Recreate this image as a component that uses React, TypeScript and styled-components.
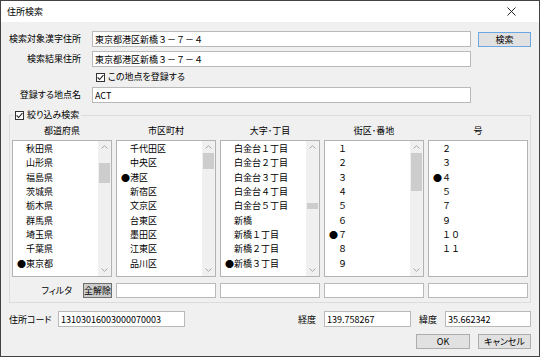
import React from "react";
import styled, { createGlobalStyle } from "styled-components";

const GlobalStyle = createGlobalStyle`
  html, body { margin: 0; padding: 0; background: #f0f0f0; }
  body {
    font-family: "Noto Sans CJK JP", "Noto Sans", sans-serif;
    font-size: 9px;
    color: #000;
  }
  * { box-sizing: border-box; }
`;

const Window = styled.div`
  width: 540px;
  height: 357px;
  border: 1px solid #434343;
  background: #f0f0f0;
  display: flex;
  flex-direction: column;
  overflow: hidden;
`;

const TitleBar = styled.div`
  flex: none;
  height: 21px;
  background: #fff;
  display: flex;
  align-items: center;
  justify-content: space-between;
  padding: 0 23px 0 6px;
  line-height: 21px;
`;

const Content = styled.div`
  flex: 1;
  display: flex;
  flex-direction: column;
  padding: 9px 8px 0 8px;
`;

const Form = styled.div`
  display: grid;
  grid-template-columns: 83px 379px 60px;
  grid-template-rows: 16px 16px 12px 16px;
  row-gap: 4px;
`;

const FieldLabel = styled.div`
  text-align: right;
  padding-right: 11px;
  line-height: 16px;
  white-space: nowrap;
  font-feature-settings: "palt";
`;

const TextBox = styled.input<{ $h?: number }>`
  display: block;
  width: 100%;
  height: ${(p) => p.$h ?? 16}px;
  margin: 0;
  border: 1px solid #b9b9b9;
  background: #fff;
  padding: 0 2px;
  font: inherit;
  color: #000;
  outline: none;
`;

const Button = styled.button<{ $w: number; $default?: boolean }>`
  width: ${(p) => p.$w}px;
  height: 15px;
  margin: 0;
  padding: 0;
  border: 1px solid ${(p) => (p.$default ? "#6aa7e3" : "#adadad")};
  background: #e1e1e1;
  font: inherit;
  color: #000;
  line-height: 13px;
  font-feature-settings: "palt";
`;

const SearchButton = styled(Button)`
  justify-self: end;
  align-self: end;
`;

const CheckRow = styled.label<{ $indent?: number }>`
  display: flex;
  align-items: center;
  gap: 3px;
  padding-left: ${(p) => p.$indent ?? 0}px;
  white-space: nowrap;
  font-feature-settings: "palt";
  line-height: 12px;
`;

const CheckBox = styled.span`
  flex: none;
  width: 9px;
  height: 9px;
  border: 1px solid #333;
  background: #fff;
  display: flex;
  align-items: center;
  justify-content: center;
`;

const Group = styled.fieldset`
  margin: 6px 0 0 0;
  padding: 0 2px 4px 2px;
  border: 1px solid #dcdcdc;
  min-width: 0;
`;

const Legend = styled.legend`
  padding: 0 2px;
  margin-left: 1px;
  height: 12px;
`;

const Columns = styled.div<{ $top: number; $h?: number }>`
  display: grid;
  grid-template-columns: repeat(5, 100px);
  column-gap: 4px;
  margin-top: ${(p) => p.$top}px;
  ${(p) => (p.$h ? `height: ${p.$h}px;` : "")}
`;

const ColumnHeader = styled.div`
  text-align: center;
  line-height: 14px;
  height: 14px;
`;

const ListBox = styled.div`
  height: 137px;
  border: 1px solid #b3b3b3;
  background: #fff;
  display: flex;
  overflow: hidden;
`;

const Items = styled.div`
  flex: 1;
  min-width: 0;
  padding: 1px 0 0 4px;
  overflow: hidden;
`;

const Item = styled.div`
  height: 14.35px;
  line-height: 14.35px;
  white-space: nowrap;
  display: flex;
`;

const Marker = styled.span`
  flex: none;
  width: 9px;
  text-align: center;
`;

const ScrollBar = styled.div`
  flex: none;
  width: 13px;
  background: #f0f0f0;
  display: flex;
  flex-direction: column;
`;

const ArrowBox = styled.div`
  flex: none;
  height: 12px;
  display: flex;
  align-items: center;
  justify-content: center;
`;

const Track = styled.div`
  flex: 1;
  padding: 0 1px;
`;

const Thumb = styled.div`
  background: #cdcdcd;
  width: 100%;
`;

const FilterCell = styled.div`
  display: flex;
  align-items: center;
  justify-content: flex-end;
  gap: 11px;
`;

const FilterLabel = styled.span`
  font-feature-settings: "palt";
  white-space: nowrap;
`;

const ClearButton = styled.button`
  width: 29px;
  height: 15px;
  margin: 0;
  padding: 0;
  border: 1px solid #6f6f6f;
  background: #cccccc;
  font: inherit;
  color: #000;
  line-height: 13px;
  white-space: nowrap;
`;

const BottomRow = styled.div`
  margin-top: 8px;
  display: flex;
  align-items: center;
  justify-content: space-between;
  height: 16px;
`;

const Field = styled.div`
  display: flex;
  align-items: center;
  gap: 8px;
`;

const InlineLabel = styled.span<{ $w?: number }>`
  white-space: nowrap;
  font-feature-settings: "palt";
  ${(p) => (p.$w ? `width: ${p.$w}px;` : "")}
`;

const FieldBox = styled.div<{ $w: number }>`
  width: ${(p) => p.$w}px;
`;

const ButtonRow = styled.div`
  margin-top: 7px;
  display: flex;
  justify-content: flex-end;
  gap: 8px;
`;

const Check = () => (
  <CheckBox>
    <svg width="7" height="7" viewBox="0 0 7 7">
      <polyline points="0.6,3.4 2.6,5.5 6.4,1.2" fill="none" stroke="#222" strokeWidth="1.1" />
    </svg>
  </CheckBox>
);

const Chevron = ({ down }: { down?: boolean }) => (
  <svg width="7" height="4" viewBox="0 0 7 4">
    <polyline
      points={down ? "0.5,0.5 3.5,3.3 6.5,0.5" : "0.5,3.5 3.5,0.7 6.5,3.5"}
      fill="none"
      stroke="#a8a8a8"
      strokeWidth="1"
    />
  </svg>
);

type ListData = {
  header: string;
  items: string[];
  selected: number;
  thumb?: { top: number; height: number };
};

const lists: ListData[] = [
  {
    header: "都道府県",
    items: ["秋田県", "山形県", "福島県", "茨城県", "栃木県", "群馬県", "埼玉県", "千葉県", "東京都"],
    selected: 8,
    thumb: { top: 10, height: 20 },
  },
  {
    header: "市区町村",
    items: ["千代田区", "中央区", "港区", "新宿区", "文京区", "台東区", "墨田区", "江東区", "品川区"],
    selected: 2,
    thumb: { top: 0, height: 16 },
  },
  {
    header: "大字･丁目",
    items: ["白金台１丁目", "白金台２丁目", "白金台３丁目", "白金台４丁目", "白金台５丁目", "新橋", "新橋１丁目", "新橋２丁目", "新橋３丁目"],
    selected: 8,
    thumb: { top: 50, height: 6 },
  },
  {
    header: "街区･番地",
    items: ["１", "２", "３", "４", "５", "６", "７", "８", "９"],
    selected: 6,
    thumb: { top: 0, height: 38 },
  },
  {
    header: "号",
    items: ["２", "３", "４", "５", "７", "９", "１０", "１１"],
    selected: 2,
  },
];

const List = ({ data }: { data: ListData }) => (
  <ListBox>
    <Items>
      {data.items.map((it, i) => (
        <Item key={it}>
          <Marker>{i === data.selected ? "●" : ""}</Marker>
          <span>{it}</span>
        </Item>
      ))}
    </Items>
    {data.thumb && (
      <ScrollBar>
        <ArrowBox>
          <Chevron />
        </ArrowBox>
        <Track>
          <Thumb style={{ marginTop: data.thumb.top, height: data.thumb.height }} />
        </Track>
        <ArrowBox>
          <Chevron down />
        </ArrowBox>
      </ScrollBar>
    )}
  </ListBox>
);

export default function App() {
  return (
    <>
      <GlobalStyle />
      <Window>
        <TitleBar>
          <span>住所検索</span>
          <svg width="9" height="9" viewBox="0 0 9 9">
            <path d="M0.5 0.5 L8.5 8.5 M8.5 0.5 L0.5 8.5" stroke="#222" strokeWidth="1" />
          </svg>
        </TitleBar>
        <Content>
          <Form>
            <FieldLabel>検索対象漢字住所</FieldLabel>
            <TextBox readOnly defaultValue="東京都港区新橋３－７－４" />
            <SearchButton $w={53} $default>
              検索
            </SearchButton>

            <FieldLabel>検索結果住所</FieldLabel>
            <TextBox readOnly defaultValue="東京都港区新橋３－７－４" />
            <span />

            <span />
            <CheckRow $indent={4}>
              <Check />
              この地点を登録する
            </CheckRow>
            <span />

            <FieldLabel>登録する地点名</FieldLabel>
            <TextBox readOnly defaultValue="ACT" />
            <span />
          </Form>

          <Group>
            <Legend>
              <CheckRow>
                <Check />
                絞り込み検索
              </CheckRow>
            </Legend>
            <Columns $top={3}>
              {lists.map((l) => (
                <ColumnHeader key={l.header}>{l.header}</ColumnHeader>
              ))}
            </Columns>
            <Columns $top={2}>
              {lists.map((l) => (
                <List key={l.header} data={l} />
              ))}
            </Columns>
            <Columns $top={6} $h={15}>
              <FilterCell>
                <FilterLabel>フィルタ</FilterLabel>
                <ClearButton>全解除</ClearButton>
              </FilterCell>
              <TextBox $h={15} readOnly defaultValue="" />
              <TextBox $h={15} readOnly defaultValue="" />
              <TextBox $h={15} readOnly defaultValue="" />
              <TextBox $h={15} readOnly defaultValue="" />
            </Columns>
          </Group>

          <BottomRow>
            <Field>
              <InlineLabel $w={41}>住所コード</InlineLabel>
              <FieldBox $w={127}>
                <TextBox readOnly defaultValue="13103016003000070003" />
              </FieldBox>
            </Field>
            <Field>
              <InlineLabel>経度</InlineLabel>
              <FieldBox $w={87}>
                <TextBox readOnly defaultValue="139.758267" />
              </FieldBox>
              <InlineLabel>緯度</InlineLabel>
              <FieldBox $w={86}>
                <TextBox readOnly defaultValue="35.662342" />
              </FieldBox>
            </Field>
          </BottomRow>

          <ButtonRow>
            <Button $w={54}>OK</Button>
            <Button $w={53}>キャンセル</Button>
          </ButtonRow>
        </Content>
      </Window>
    </>
  );
}
